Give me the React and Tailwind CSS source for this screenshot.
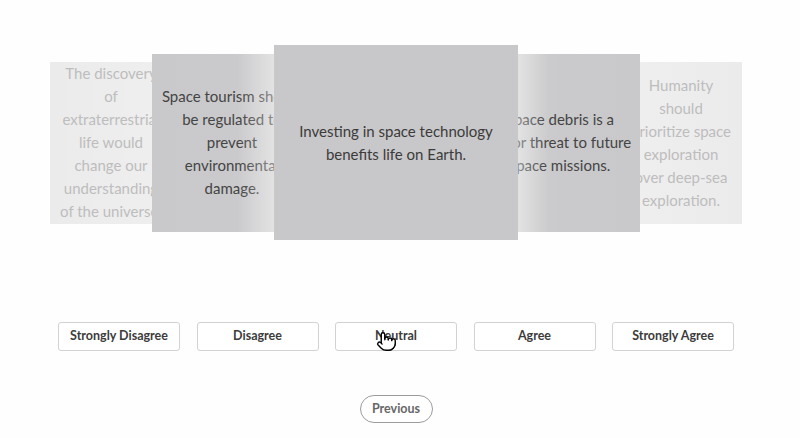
import { Pointer } from 'lucide-react'

// lines are kept as the carousel wraps them
const statements = [
  {
    lines: ['The discovery', 'of', 'extraterrestrial', 'life would', 'change our', 'understanding', 'of the universe.'],
    tier: 'outer',
  },
  {
    lines: ['Space tourism should', 'be regulated to', 'prevent', 'environmental', 'damage.'],
    tier: 'side',
    side: 'left',
  },
  { lines: ['Investing in space technology', 'benefits life on Earth.'], tier: 'center' },
  {
    lines: ['Space debris is a', 'major threat to future', 'space missions.'],
    tier: 'side',
    side: 'right',
  },
  {
    lines: ['Humanity', 'should', 'prioritize space', 'exploration', 'over deep-sea', 'exploration.'],
    tier: 'outer',
  },
]

const choices = ['Strongly Disagree', 'Disagree', 'Neutral', 'Agree', 'Strongly Agree']

function Lines({ lines }) {
  return (
    <p className="whitespace-nowrap">
      {lines.map((l, i) => (
        <span key={i} className="block">
          {l}
        </span>
      ))}
    </p>
  )
}

function Card({ s, index }) {
  if (s.tier === 'center') {
    return (
      <div className="relative z-30 -ml-[38px] flex h-[195px] w-[244px] shrink-0 items-center justify-center bg-[#c8c7c9] text-center text-[15px] leading-[23px] text-[#3b3b3b]">
        <Lines lines={s.lines} />
      </div>
    )
  }
  if (s.tier === 'side') {
    const left = s.side === 'left'
    return (
      <div
        className={
          left
            ? 'relative z-20 -ml-[20px] flex h-[178px] w-[160px] shrink-0 items-center justify-center bg-gradient-to-r from-[#c9c9cb] via-[#cacacc] to-[#d4d4d5] text-center text-[15px] leading-[23px] text-[#444]'
            : 'relative z-20 -ml-[38px] flex h-[178px] w-[160px] shrink-0 items-center justify-center bg-gradient-to-l from-[#c9c9cb] via-[#cacacc] to-[#d4d4d5] text-center text-[15px] leading-[23px] text-[#444]'
        }
      >
        <Lines lines={s.lines} />
        {/* sheen where the card turns away behind the front one */}
        {left ? (
          <div className="absolute top-0 left-[86px] h-full w-[36px] bg-gradient-to-r from-transparent via-white/20 to-white/40" />
        ) : (
          <div className="absolute top-0 left-[38px] h-full w-[30px] bg-gradient-to-l from-transparent via-white/20 to-white/40" />
        )}
      </div>
    )
  }
  return (
    <div
      className={
        index === 0
          ? 'relative z-10 flex h-[162px] w-[122px] shrink-0 items-center justify-center bg-gradient-to-r from-[#ebebeb] to-[#efefef] text-center text-[15px] leading-[23px] text-[#bdbdbd]'
          : 'relative z-10 -ml-[20px] flex h-[162px] w-[122px] shrink-0 items-center justify-center bg-gradient-to-l from-[#ebebeb] to-[#efefef] text-center text-[15px] leading-[23px] text-[#bdbdbd]'
      }
    >
      <Lines lines={s.lines} />
    </div>
  )
}

export default function App() {
  return (
    <div className="min-h-[438px] w-full bg-[#fefefe] font-['Lato',_'Liberation_Sans',_sans-serif]">
      <div className="w-[792px]">
        {/* ===== carousel ===== */}
        <div className="flex justify-center pt-[45px]">
          <div className="flex items-center">
            {statements.map((s, i) => (
              <Card key={i} s={s} index={i} />
            ))}
          </div>
        </div>

        {/* ===== answers ===== */}
        <div className="mt-[82px] flex justify-center gap-[16.5px]">
          {choices.map((c) => (
            <button
              key={c}
              className="relative h-[29px] w-[122px] rounded-[3px] border border-[#d2d2d2] bg-white text-[12.5px] font-bold text-[#3c3c3c]"
            >
              {c}
              {c === 'Neutral' && (
                <Pointer
                  size={21}
                  fill="white"
                  stroke="black"
                  strokeWidth={1.6}
                  className="absolute top-[8px] left-[40px]"
                />
              )}
            </button>
          ))}
        </div>

        <div className="mt-[44px] flex justify-center">
          <button className="h-[28px] w-[73px] rounded-full border border-[#9c9c9c] bg-white text-[12.5px] font-bold text-[#666]">
            Previous
          </button>
        </div>
      </div>
    </div>
  )
}
